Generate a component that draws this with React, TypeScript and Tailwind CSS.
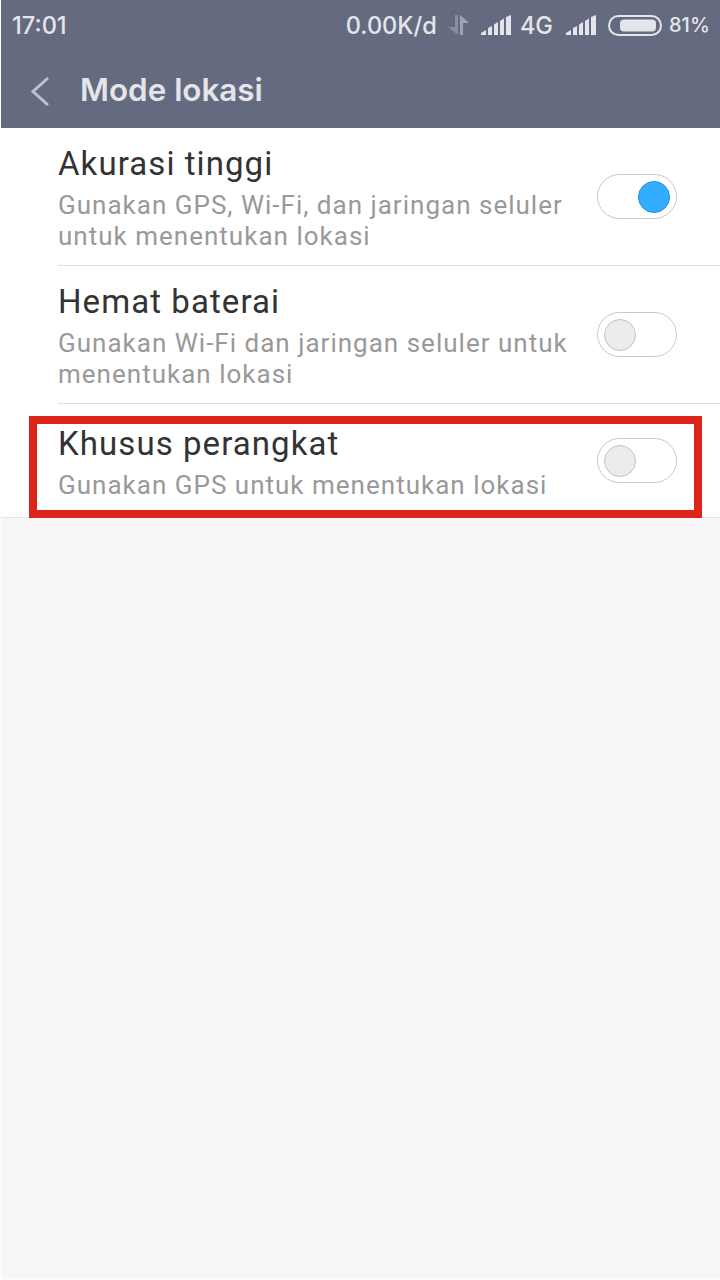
function SignalBars() {
  return (
    <svg width="30" height="21" viewBox="0 0 30 21" fill="#e4e5ea">
      <polygon points="0,20 0,18 5,15 5,20" />
      <polygon points="7,20 7,13 11,11 11,20" />
      <polygon points="13,20 13,9.5 17,7 17,20" />
      <polygon points="19,20 19,6 23,3.5 23,20" />
      <polygon points="25,20 25,2 30,0 30,20" />
    </svg>
  );
}

function Toggle({ on }: { on?: boolean }) {
  return (
    <div className={`flex h-[45px] w-[80px] shrink-0 items-center rounded-full border border-[#c8c8c8] bg-white px-[6px] ${on ? 'justify-end' : 'justify-start'}`}>
      {on ? (
        <div className="size-[32px] rounded-full border border-[#1f8fe0] bg-[#33adff]" />
      ) : (
        <div className="size-[32px] rounded-full border border-[#c4c4c4] bg-[#ececec]" />
      )}
    </div>
  );
}

function Row({ title, desc, on, className }: { title: string; desc: string[]; on?: boolean; className: string }) {
  return (
    <div className={`ml-[57px] flex items-center justify-between pr-[43px] ${className}`}>
      <div className="flex flex-col pb-[3px]">
        <div className="text-[33px] leading-[52px] tracking-[1.07px] text-[#333333]">{title}</div>
        {desc.map((line) => (
          <div key={line} className="text-[26px] leading-[31px] tracking-[1.01px] text-[#999999]">
            {line}
          </div>
        ))}
      </div>
      <Toggle on={on} />
    </div>
  );
}

export default function App() {
  return (
    <div className="relative flex h-[1280px] w-[720px] flex-col overflow-hidden border-b border-l border-[#fdfdfd] bg-[#f7f7f7] font-['Roboto',sans-serif]">
      {/* status bar + title */}
      <div className="h-[128px] bg-[#646a80] bg-[repeating-linear-gradient(90deg,#ffffff03_0_1px,transparent_1px_3px),repeating-linear-gradient(0deg,#00000004_0_1px,transparent_1px_3px)] font-['Inter',sans-serif] text-[#e4e5ea]">
        <div className="flex h-[50px] items-center justify-between pl-[11px] pr-[13px] pt-[1px] text-[23.6px] font-medium">
          <span>17:01</span>
          <div className="flex items-center">
            <span>0.00K/d</span>
            <svg className="ml-[11px]" width="22" height="21" viewBox="0 0 22 21">
              <polygon points="0,12 7,12 7,0 10,0 10,20" fill="#8a8ea0" />
              <polygon points="12,20 12,0 21,8 15,8 15,20" fill="#a0a3b2" />
            </svg>
            <div className="ml-[11px]"><SignalBars /></div>
            <span className="ml-[9px]">4G</span>
            <div className="ml-[13px]"><SignalBars /></div>
            <svg className="ml-[12px]" width="54" height="21" viewBox="0 0 54 21" fill="none">
              <rect x="1" y="1" width="52" height="19" rx="9.5" stroke="#e4e5ea" strokeWidth="2" />
              <rect x="12" y="4.5" width="36" height="12" rx="4" fill="#e4e5ea" />
            </svg>
            <span className="ml-[7px] w-[38px] text-[20px]">81%</span>
          </div>
        </div>
        <div className="flex h-[78px] items-center pt-[3px]">
          <svg className="ml-[29px]" width="20" height="32" viewBox="0 0 20 32" fill="none">
            <path d="M18 3 3 16.5 18 30" stroke="#bfc1cc" strokeWidth="3" />
          </svg>
          <span className="ml-[30px] text-[31.4px] font-semibold text-[#e4e5ea]">Mode lokasi</span>
        </div>
      </div>

      {/* list */}
      <div className="border-b border-[#e4e4e4] bg-white">
        <Row
          title="Akurasi tinggi"
          desc={['Gunakan GPS, Wi-Fi, dan jaringan seluler', 'untuk menentukan lokasi']}
          on
          className="h-[138px] border-b border-[#dcdcdc]"
        />
        <Row
          title="Hemat baterai"
          desc={['Gunakan Wi-Fi dan jaringan seluler untuk', 'menentukan lokasi']}
          className="h-[138px] border-b border-[#dcdcdc]"
        />
        <Row title="Khusus perangkat" desc={['Gunakan GPS untuk menentukan lokasi']} className="h-[113px]" />
      </div>

      {/* highlight drawn over the third row */}
      <div className="absolute left-[28px] top-[416px] h-[102px] w-[673px] border-[8px] border-[#dc241b]" />
    </div>
  );
}
